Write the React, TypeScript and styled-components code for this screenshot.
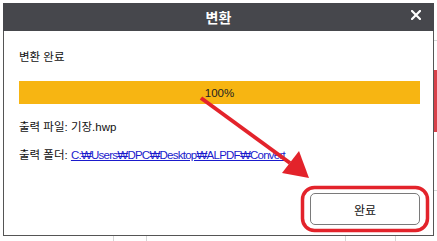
import React from 'react'
import styled, { createGlobalStyle } from 'styled-components'

const GlobalStyle = createGlobalStyle`
  html, body {
    margin: 0;
    padding: 0;
    background: #fff;
  }
  body {
    font-family: 'Liberation Sans', 'Noto Sans CJK KR', sans-serif;
  }
`

const line = 'linear-gradient(#d6d6d6, #d6d6d6)'
const red = 'linear-gradient(#d9414a, #d9414a)'

// the page behind the modal only peeks out at the edges
const Screen = styled.div`
  position: relative;
  width: 437px;
  height: 241px;
  box-sizing: border-box;
  padding: 3px 3px 5px 3px;
  overflow: hidden;
  background-color: #fff;
  background-repeat: no-repeat;
  background-image: ${red}, ${line}, ${line}, ${line}, ${line}, ${line}, ${line};
  background-position: 434px 70px, 434px 40px, 434px 190px, 113px 236px, 146px 236px, 345px 236px,
    395px 236px;
  background-size: 3px 62px, 3px 1px, 3px 1px, 1px 5px, 1px 5px, 1px 5px, 1px 5px;
`

const Dialog = styled.div`
  width: 431px;
  height: 233px;
  box-sizing: border-box;
  display: flex;
  flex-direction: column;
  background: #fff;
  border: 1px solid #555;
  border-top: none;
`

const TitleBar = styled.div`
  height: 28px;
  margin: 0 -1px;
  display: grid;
  grid-template-columns: 40px 1fr 40px;
  align-items: center;
  background: #46474c;
  color: #fff;
  font-family: 'Noto Sans CJK KR', sans-serif;
  font-size: 14px;
  font-weight: 700;
  text-align: center;
`

const CloseButton = styled.button`
  justify-self: end;
  margin: 0 11px 4px 0;
  width: 14px;
  height: 14px;
  padding: 0;
  border: none;
  background: none;
  display: flex;
  align-items: center;
  justify-content: center;
  cursor: pointer;
`

const Body = styled.div`
  flex: 1;
  display: flex;
  flex-direction: column;
  padding: 17px 13px 0 15px;
`

const Line = styled.div<{ $gap?: number }>`
  height: 18px;
  line-height: 18px;
  margin-top: ${({ $gap }) => $gap ?? 0}px;
  font-size: 11.5px;
  color: #111;
  white-space: nowrap;
`

const Progress = styled.div`
  margin-top: 15px;
  height: 23px;
  background: #f7b512;
  display: flex;
  align-items: center;
  justify-content: center;
  font-size: 11.5px;
  color: #222;
`

const Path = styled.a`
  color: #1a1acc;
  text-decoration: underline;
  font-family: 'Liberation Sans', 'DejaVu Sans', 'Noto Sans CJK KR', sans-serif;
  letter-spacing: -0.75px;
`

const Footer = styled.div`
  display: flex;
  justify-content: flex-end;
  margin-top: 29px;
`

const DoneButton = styled.button`
  width: 110px;
  height: 32px;
  box-sizing: border-box;
  border: 1px solid #7a7a7a;
  border-radius: 5px;
  background: #fff;
  font-family: 'Noto Sans CJK KR', sans-serif;
  font-size: 12px;
  color: #111;
`

// red annotation drawn over the screenshot
const Markup = styled.svg`
  position: absolute;
  left: 0;
  top: 0;
  pointer-events: none;
`

export default function App(): React.ReactElement {
  return (
    <Screen>
      <GlobalStyle />
      <Dialog>
        <TitleBar>
          <span />
          변환
          <CloseButton aria-label="닫기">
            <svg width="10" height="10" viewBox="0 0 10 10">
              <path d="M1 1 L9 9 M9 1 L1 9" stroke="#fff" strokeWidth="2.2" strokeLinecap="square" />
            </svg>
          </CloseButton>
        </TitleBar>
        <Body>
          <Line>변환 완료</Line>
          <Progress>100%</Progress>
          <Line $gap={14}>출력 파일: 기장.hwp</Line>
          <Line $gap={10}>
            출력 폴더: <Path href="#">C:₩Users₩DPC₩Desktop₩ALPDF₩Convert</Path>
          </Line>
          <Footer>
            <DoneButton>완료</DoneButton>
          </Footer>
        </Body>
      </Dialog>

      <Markup width="437" height="241" viewBox="0 0 437 241">
        <line x1="201" y1="98" x2="290" y2="163" stroke="#e3232b" strokeWidth="4" />
        <polygon points="309,178 282,173 299,151" fill="#e3232b" />
        <rect x="302.5" y="187.5" width="125" height="43" rx="12" fill="none" stroke="#e3232b" strokeWidth="3.5" />
      </Markup>
    </Screen>
  )
}
